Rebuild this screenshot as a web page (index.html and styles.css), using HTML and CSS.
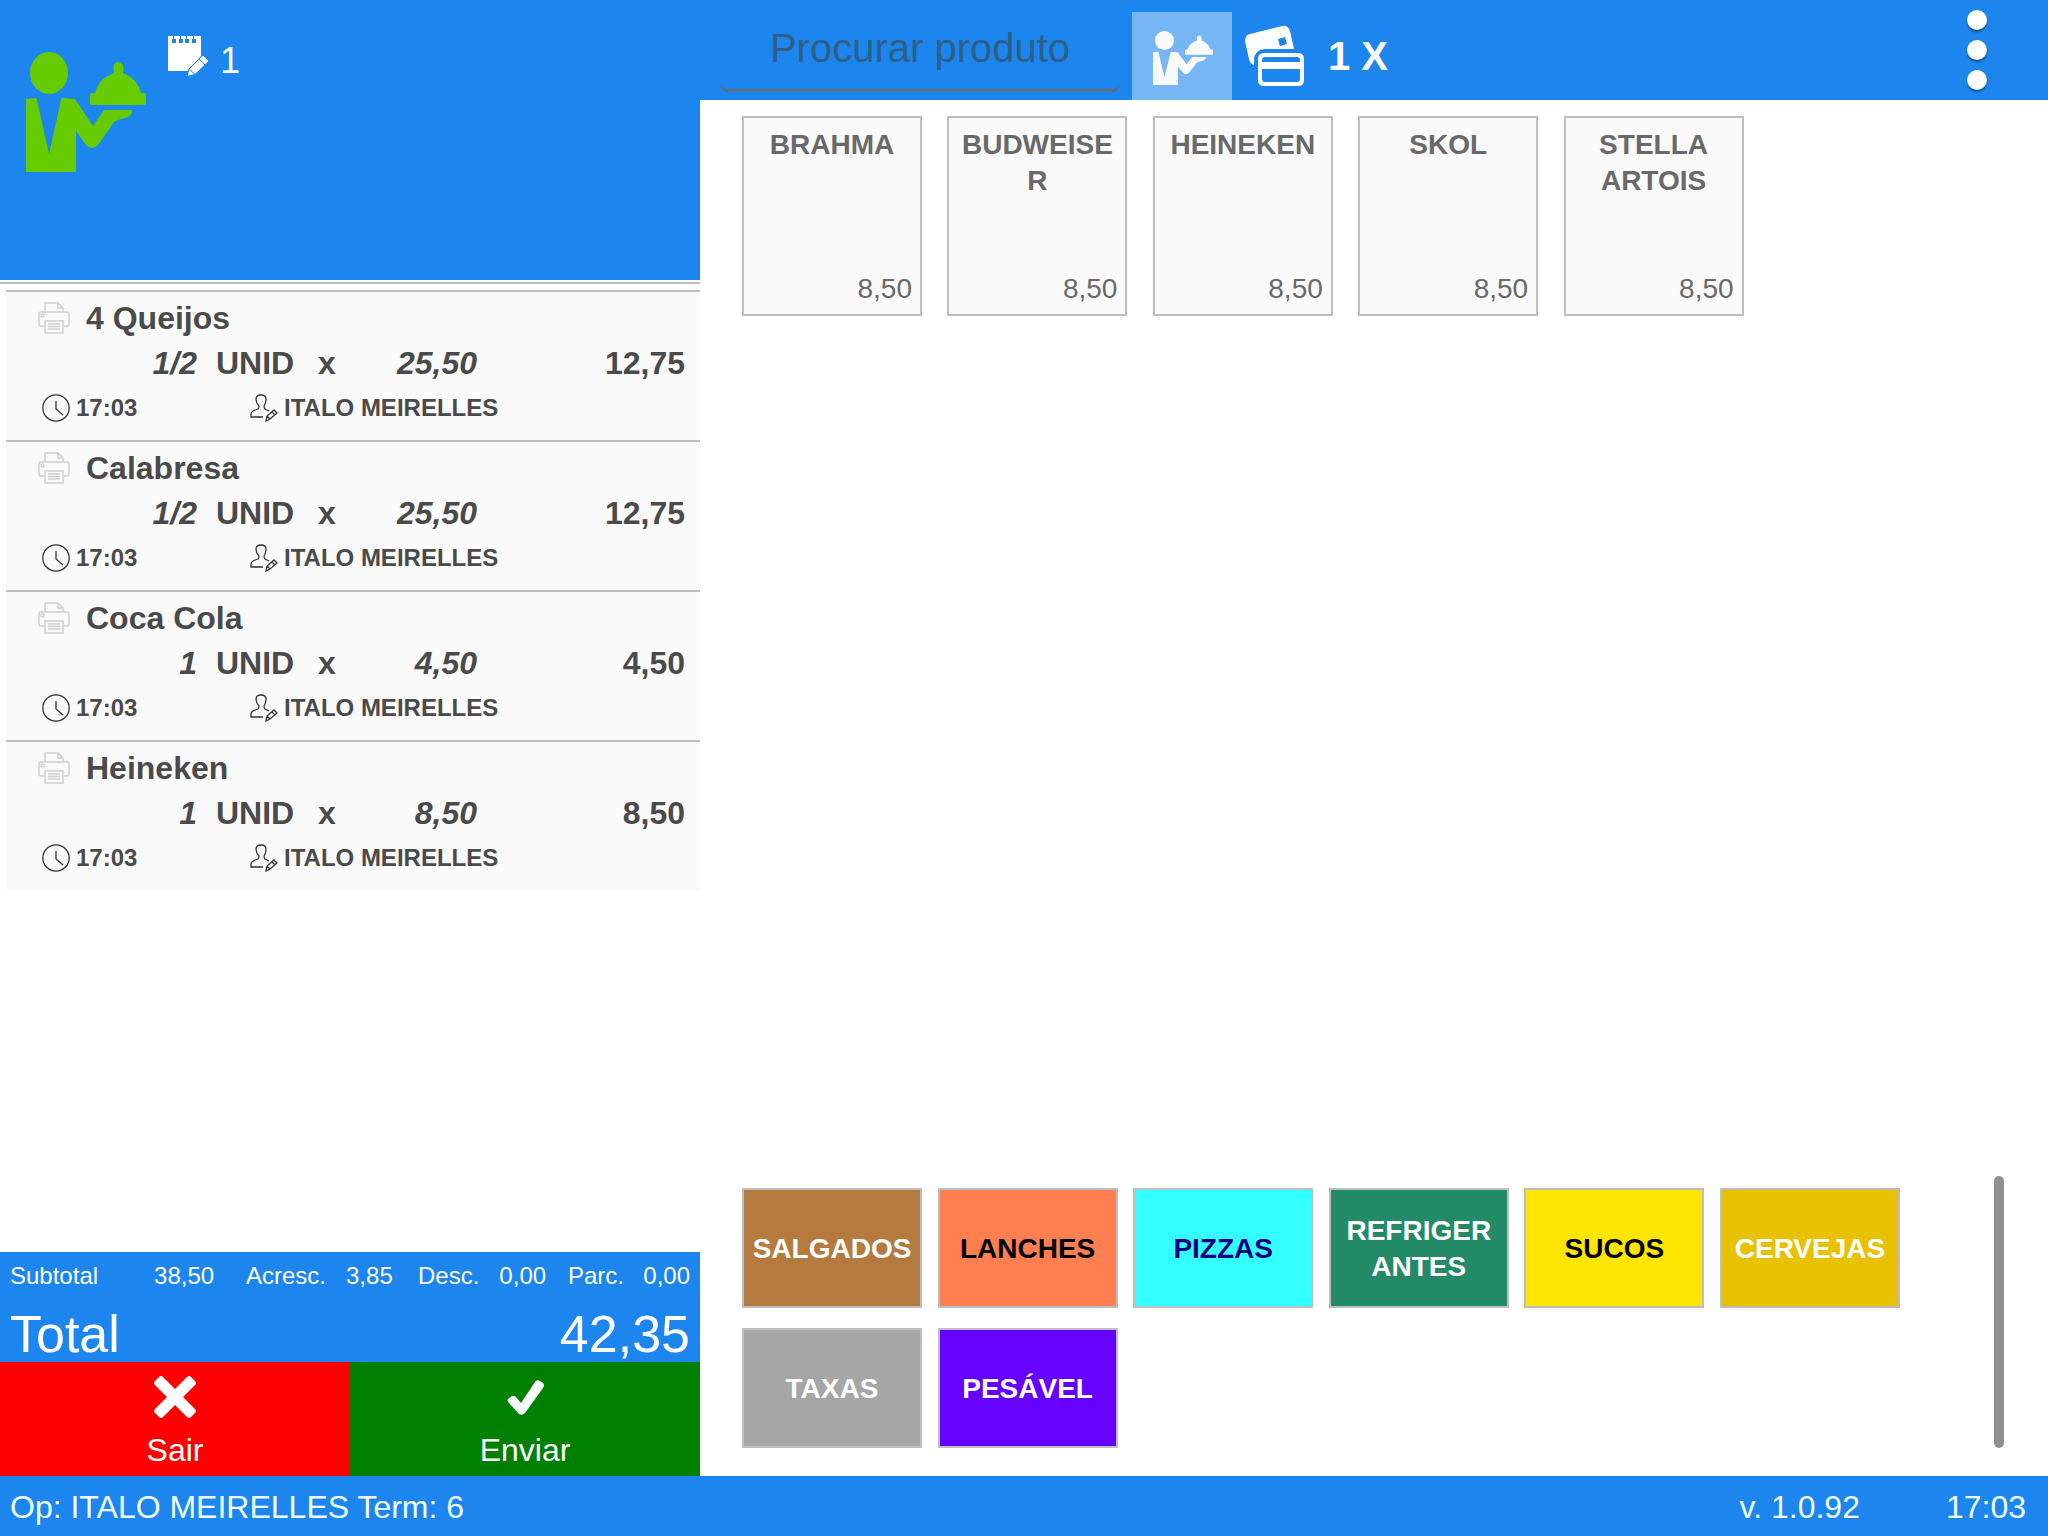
FILE: index.html
```html
<!DOCTYPE html>
<html lang="pt-BR">
<head>
<meta charset="utf-8">
<meta name="viewport" content="width=device-width, initial-scale=1">
<title>Pedido</title>
<link rel="stylesheet" href="styles.css">
</head>
<body>
<svg class="sprite" aria-hidden="true">
  <symbol id="waiter" viewBox="0 0 120 120" preserveAspectRatio="none">
    <ellipse cx="23" cy="21" rx="19" ry="21"/>
    <path d="M0 47L10 46Q11 46 11 48L23 102L35 48Q35 46 37 46L48 47Q50 47 51 50L67 74L78 58H106Q107 64 99 66Q91 68 88 70L72 93Q66 99 60 93L50 79V120H0Z"/>
    <path d="M66 41H69Q73 26 88 21Q86 10 92 10Q99 10 97 21Q111 26 115 41H118Q120 41 120 43V51Q120 53 118 53H66Q64 53 64 51V43Q64 41 66 41Z"/>
  </symbol>
  <symbol id="printer" viewBox="0 0 32 32">
    <g fill="none" stroke="#d0d0d0" stroke-width="1.5">
      <path d="M7 10V1H20L25 6V10M20 1V6H25M6 24H3Q1 24 1 22V12Q1 10 3 10H29Q31 10 31 12V22Q31 24 29 24H26"/>
      <circle cx="4.500" cy="13.500" r="1.500"/>
      <path d="M7 19H25V31H7ZM10 22H22M10 24.500H22M10 27H22"/>
    </g>
  </symbol>
  <symbol id="clock" viewBox="0 0 28 28">
    <g fill="none" stroke="#333" stroke-width="1.300"><circle cx="14" cy="14" r="13.200"/><path d="M14 7V15L21 21"/></g>
  </symbol>
  <symbol id="user" viewBox="0 0 28 28">
    <g fill="none" stroke="#333" stroke-width="1.300">
      <path d="M13 23H1V20Q1 17 8 15Q9 14 9 12Q6 9 6 5Q6 1 11 1Q16 1 16 5Q16 9 14 12Q14 14 15 15L19 17"/>
      <path d="M16 27L17 22L24 16L27 19L20 25ZM17 22L20 25M22 18L25 21"/>
    </g>
  </symbol>
</svg>

<div class="app">
  <aside class="order">
    <header class="order-head">
      <svg class="waiter-large" aria-label="Atendimento"><use href="#waiter"/></svg>
      <div class="ticket">
        <svg class="note" viewBox="0 0 40 40" aria-hidden="true">
          <path fill="#fff" d="M0 0H33V20L20 35H0Z"/>
          <path fill="#1c86ee" d="M4 3H8V7H4ZM11 3H15V7H11ZM17 3H21V7H17ZM24 3H28V7H24ZM5 0H6V3H5ZM12 0H13V3H12ZM18 0H19V3H18ZM25 0H26V3H25Z"/>
          <path fill="#fff" stroke="#1c86ee" d="M19 40.500L21 33L35 19L41 25L27 38.500ZM21 33L27 38.500M31 23L37 29"/>
        </svg>
        <span>1</span>
      </div>
    </header>

    <ul class="items">
      <li class="item">
        <div class="item-name"><svg class="i-print"><use href="#printer"/></svg>4 Queijos</div>
        <div class="item-values"><i>1/2</i><span>UNID</span><span>x</span><i>25,50</i><b>12,75</b></div>
        <div class="item-meta"><svg class="i-meta"><use href="#clock"/></svg><time>17:03</time><svg class="i-meta"><use href="#user"/></svg><span>ITALO MEIRELLES</span></div>
      </li>
      <li class="item">
        <div class="item-name"><svg class="i-print"><use href="#printer"/></svg>Calabresa</div>
        <div class="item-values"><i>1/2</i><span>UNID</span><span>x</span><i>25,50</i><b>12,75</b></div>
        <div class="item-meta"><svg class="i-meta"><use href="#clock"/></svg><time>17:03</time><svg class="i-meta"><use href="#user"/></svg><span>ITALO MEIRELLES</span></div>
      </li>
      <li class="item">
        <div class="item-name"><svg class="i-print"><use href="#printer"/></svg>Coca Cola</div>
        <div class="item-values"><i>1</i><span>UNID</span><span>x</span><i>4,50</i><b>4,50</b></div>
        <div class="item-meta"><svg class="i-meta"><use href="#clock"/></svg><time>17:03</time><svg class="i-meta"><use href="#user"/></svg><span>ITALO MEIRELLES</span></div>
      </li>
      <li class="item">
        <div class="item-name"><svg class="i-print"><use href="#printer"/></svg>Heineken</div>
        <div class="item-values"><i>1</i><span>UNID</span><span>x</span><i>8,50</i><b>8,50</b></div>
        <div class="item-meta"><svg class="i-meta"><use href="#clock"/></svg><time>17:03</time><svg class="i-meta"><use href="#user"/></svg><span>ITALO MEIRELLES</span></div>
      </li>
    </ul>

    <section class="summary">
      <dl class="parts">
        <div class="part part-wide"><dt>Subtotal</dt><dd>38,50</dd></div>
        <div class="part"><dt>Acresc.</dt><dd>3,85</dd></div>
        <div class="part"><dt>Desc.</dt><dd>0,00</dd></div>
        <div class="part"><dt>Parc.</dt><dd>0,00</dd></div>
      </dl>
      <div class="total"><span>Total</span><span>42,35</span></div>
    </section>

    <div class="actions">
      <button class="action action-exit" type="button">
        <svg viewBox="0 0 44 44" aria-hidden="true"><path d="M6 2Q8 0 10 2L22 14L34 2Q36 0 38 2L42 6Q44 8 42 10L30 22L42 34Q44 36 42 38L38 42Q36 44 34 42L22 30L10 42Q8 44 6 42L2 38Q0 36 2 34L14 22L2 10Q0 8 2 6Z"/></svg>
        Sair
      </button>
      <button class="action action-send" type="button">
        <svg viewBox="0 0 44 44" aria-hidden="true"><path d="M5 27Q4 25 5 24L9 21Q11 20 13 22L18 28L32 7Q34 4 37 6L40 8Q42 10 40 13L22 38Q19 41 16 39Z"/></svg>
        Enviar
      </button>
    </div>
  </aside>

  <main class="catalog">
    <header class="toolbar">
      <input class="search" type="text" placeholder="Procurar produto" aria-label="Procurar produto">
      <button class="tool tool-active" type="button" aria-label="Atendimento"><svg class="waiter-small"><use href="#waiter"/></svg></button>
      <button class="tool" type="button" aria-label="Pagamento">
        <svg class="cards" viewBox="0 0 60 60" aria-hidden="true">
          <path d="M5 8L37 0Q43 -1 45 5L49 23H20Q9 24 9 34V39Q5 38 4 33L0 15Q0 9 5 8Z"/>
          <path fill="#1c86ee" d="M33 13L40 11L42 18L35 20Z"/>
          <path fill-rule="evenodd" d="M19 27H53Q59 27 59 33V54Q59 60 53 60H19Q13 60 13 54V33Q13 27 19 27ZM20 31Q17 31 17 34V36H55V34Q55 31 52 31ZM17 43V53Q17 56 20 56H52Q55 56 55 53V43Z"/>
        </svg>
      </button>
      <span class="multiplier">1 X</span>
      <button class="menu" type="button" aria-label="Menu"><span></span><span></span><span></span></button>
    </header>

    <section class="products" aria-label="Produtos">
      <button class="product" type="button"><strong>BRAHMA</strong><span>8,50</span></button>
      <button class="product" type="button"><strong>BUDWEISER</strong><span>8,50</span></button>
      <button class="product" type="button"><strong>HEINEKEN</strong><span>8,50</span></button>
      <button class="product" type="button"><strong>SKOL</strong><span>8,50</span></button>
      <button class="product" type="button"><strong>STELLA ARTOIS</strong><span>8,50</span></button>
    </section>

    <section class="categories" aria-label="Categorias">
      <div class="category-grid">
        <button class="category salgados" type="button">SALGADOS</button>
        <button class="category lanches" type="button">LANCHES</button>
        <button class="category pizzas" type="button">PIZZAS</button>
        <button class="category refrigerantes" type="button">REFRIGERANTES</button>
        <button class="category sucos" type="button">SUCOS</button>
        <button class="category cervejas" type="button">CERVEJAS</button>
        <button class="category taxas" type="button">TAXAS</button>
        <button class="category pesavel" type="button">PESÁVEL</button>
      </div>
      <div class="scroll-thumb"></div>
    </section>
  </main>
</div>

<footer class="status">
  <span class="operator">Op: ITALO MEIRELLES Term: 6</span>
  <span>v. 1.0.92</span>
  <time>17:03</time>
</footer>
</body>
</html>
```
FILE: styles.css
```css
:root {
  --blue: #1c86ee;
  --line: #bebebe;
  --paper: #fafafa;
}

* { box-sizing: border-box; }

body {
  margin: 0;
  min-height: 100vh;
  display: flex;
  flex-direction: column;
  background: #fff;
  font: 32px/36px "Liberation Sans", Arial, sans-serif;
}

button, input { font: inherit; border: 0; margin: 0; padding: 0; border-radius: 0; }
button { cursor: pointer; background: none; }

.sprite { display: none; }

.app {
  flex: 1;
  display: grid;
  grid-template-columns: 700px minmax(0, 1fr);
}

/* order panel */
.order { display: flex; flex-direction: column; }

.order-head {
  height: 280px;
  padding: 36px 26px;
  display: flex;
  align-items: flex-start;
  gap: 22px;
  background: var(--blue);
}

.waiter-large { width: 120px; height: 120px; margin-top: 16px; fill: #6c0; }

.ticket { display: flex; gap: 12px; color: #fff; font-size: 36px; line-height: 50px; }
.note { width: 40px; height: 40px; overflow: visible; }

.items {
  flex: 1;
  list-style: none;
  margin: 2px 0 0;
  padding: 6px 0 0 6px;
  border-top: 2px solid var(--line);
  color: #4a4a4a;
  font-weight: bold;
}

.item {
  height: 150px;
  padding-top: 8px;
  border-top: 2px solid var(--line);
  background: var(--paper);
}

.item-name { display: flex; align-items: center; height: 36px; padding-left: 32px; gap: 16px; line-height: 34px; }
.i-print { width: 32px; height: 32px; }

.item-values {
  display: grid;
  grid-template-columns: 191px 121px 34px 1fr 208px;
  height: 36px;
  margin-top: 10px;
  padding-right: 15px;
  line-height: 34px;
}
.item-values i, .item-values b { text-align: right; }
.item-values i:first-child + span { padding-left: 19px; }

.item-meta {
  display: grid;
  grid-template-columns: 28px 168px 28px 1fr;
  column-gap: 6px;
  align-items: center;
  height: 36px;
  margin-top: 8px;
  padding-left: 36px;
  font-size: 24px;
}
.i-meta { width: 28px; height: 28px; }

.summary {
  height: 110px;
  padding: 8px 10px 0;
  background: var(--blue);
  color: #fff;
}
.parts { display: grid; grid-template-columns: 236px 172px 150px 1fr; margin: 0; font-size: 24px; line-height: 32px; }
.part { display: flex; gap: 20px; }
.part-wide { gap: 56px; }
.part:last-child { justify-content: space-between; gap: 0; }
.parts dd { margin: 0; }
.total { display: flex; justify-content: space-between; margin-top: 12px; font-size: 52px; line-height: 60px; }

.actions { display: grid; grid-template-columns: 1fr 1fr; height: 114px; }
.action {
  display: flex;
  flex-direction: column;
  align-items: center;
  padding-top: 13px;
  gap: 13px;
  color: #fff;
}
.action svg { width: 44px; height: 44px; fill: #fff; }
.action-exit { background: #f00; }
.action-send { background: #008000; }

/* catalog */
.catalog { display: flex; flex-direction: column; }

.toolbar {
  display: flex;
  align-items: flex-start;
  height: 100px;
  padding: 10px 61px 0 20px;
  background: var(--blue);
  color: #fff;
}

.search {
  width: 400px;
  height: 82px;
  margin-right: 12px;
  padding-bottom: 2px;
  background: transparent;
  border-bottom: 3px solid #596e87;
  border-radius: 8px;
  text-align: center;
  font-size: 40px;
  color: #fff;
}
.search::placeholder { color: #2e5f86; opacity: 1; }

.tool { display: flex; justify-content: center; align-items: center; height: 88px; width: 86px; margin-top: 2px; }
.tool-active { width: 100px; padding-left: 2px; background: #77b6f5; }
.waiter-small { width: 60px; height: 54px; margin-top: 4px; fill: var(--paper); }
.cards { width: 60px; height: 60px; overflow: visible; fill: #fff; }

.multiplier { flex: 1; margin: 2px 0 0 10px; font-size: 40px; font-weight: bold; line-height: 88px; }

.menu { display: flex; flex-direction: column; gap: 10px; padding-left: 20px; }
.menu span { width: 20px; height: 20px; border-radius: 50%; background: #fff; box-shadow: 0 2px 2px rgba(0, 0, 0, .4); }

.products {
  flex: 1;
  display: grid;
  grid-template-columns: repeat(auto-fill, 180px);
  grid-auto-rows: 200px;
  justify-content: space-between;
  gap: 20px;
  padding: 16px 99px 16px 42px;
}

.product {
  display: flex;
  flex-direction: column;
  justify-content: space-between;
  padding: 9px 8px 7px;
  border: 2px solid var(--line);
  background: var(--paper);
  color: #696969;
  font-size: 28px;
}
.product strong { align-self: center; overflow-wrap: anywhere; }
.product span { align-self: flex-end; }

.categories {
  display: flex;
  justify-content: space-between;
  padding: 0 44px 28px 42px;
}
.category-grid {
  flex: 1;
  display: grid;
  grid-template-columns: repeat(auto-fill, 180px);
  grid-auto-rows: 120px;
  justify-content: space-between;
  gap: 20px 12px;
  margin-right: 94px;
  padding-top: 12px;
}
.category {
  padding: 2px 8px 0;
  border: 2px solid var(--line);
  color: #fff;
  font-size: 28px;
  font-weight: bold;
  overflow-wrap: anywhere;
}
.scroll-thumb { width: 10px; border-radius: 5px; background: #8f8f8f; }

.salgados { background: #b57b3e; }
.lanches { background: #ff7f50; color: #000; }
.pizzas { background: #3ff; color: #000080; }
.refrigerantes { background: #238a68; }
.sucos { background: #ffe600; color: #000; }
.cervejas { background: #e8c202; }
.taxas { background: #a6a6a6; }
.pesavel { background: #60f; }

/* status bar */
.status {
  display: flex;
  align-items: center;
  gap: 86px;
  height: 60px;
  padding: 2px 22px 0 10px;
  background: var(--blue);
  color: azure;
}
.operator { flex: 1; }
```
